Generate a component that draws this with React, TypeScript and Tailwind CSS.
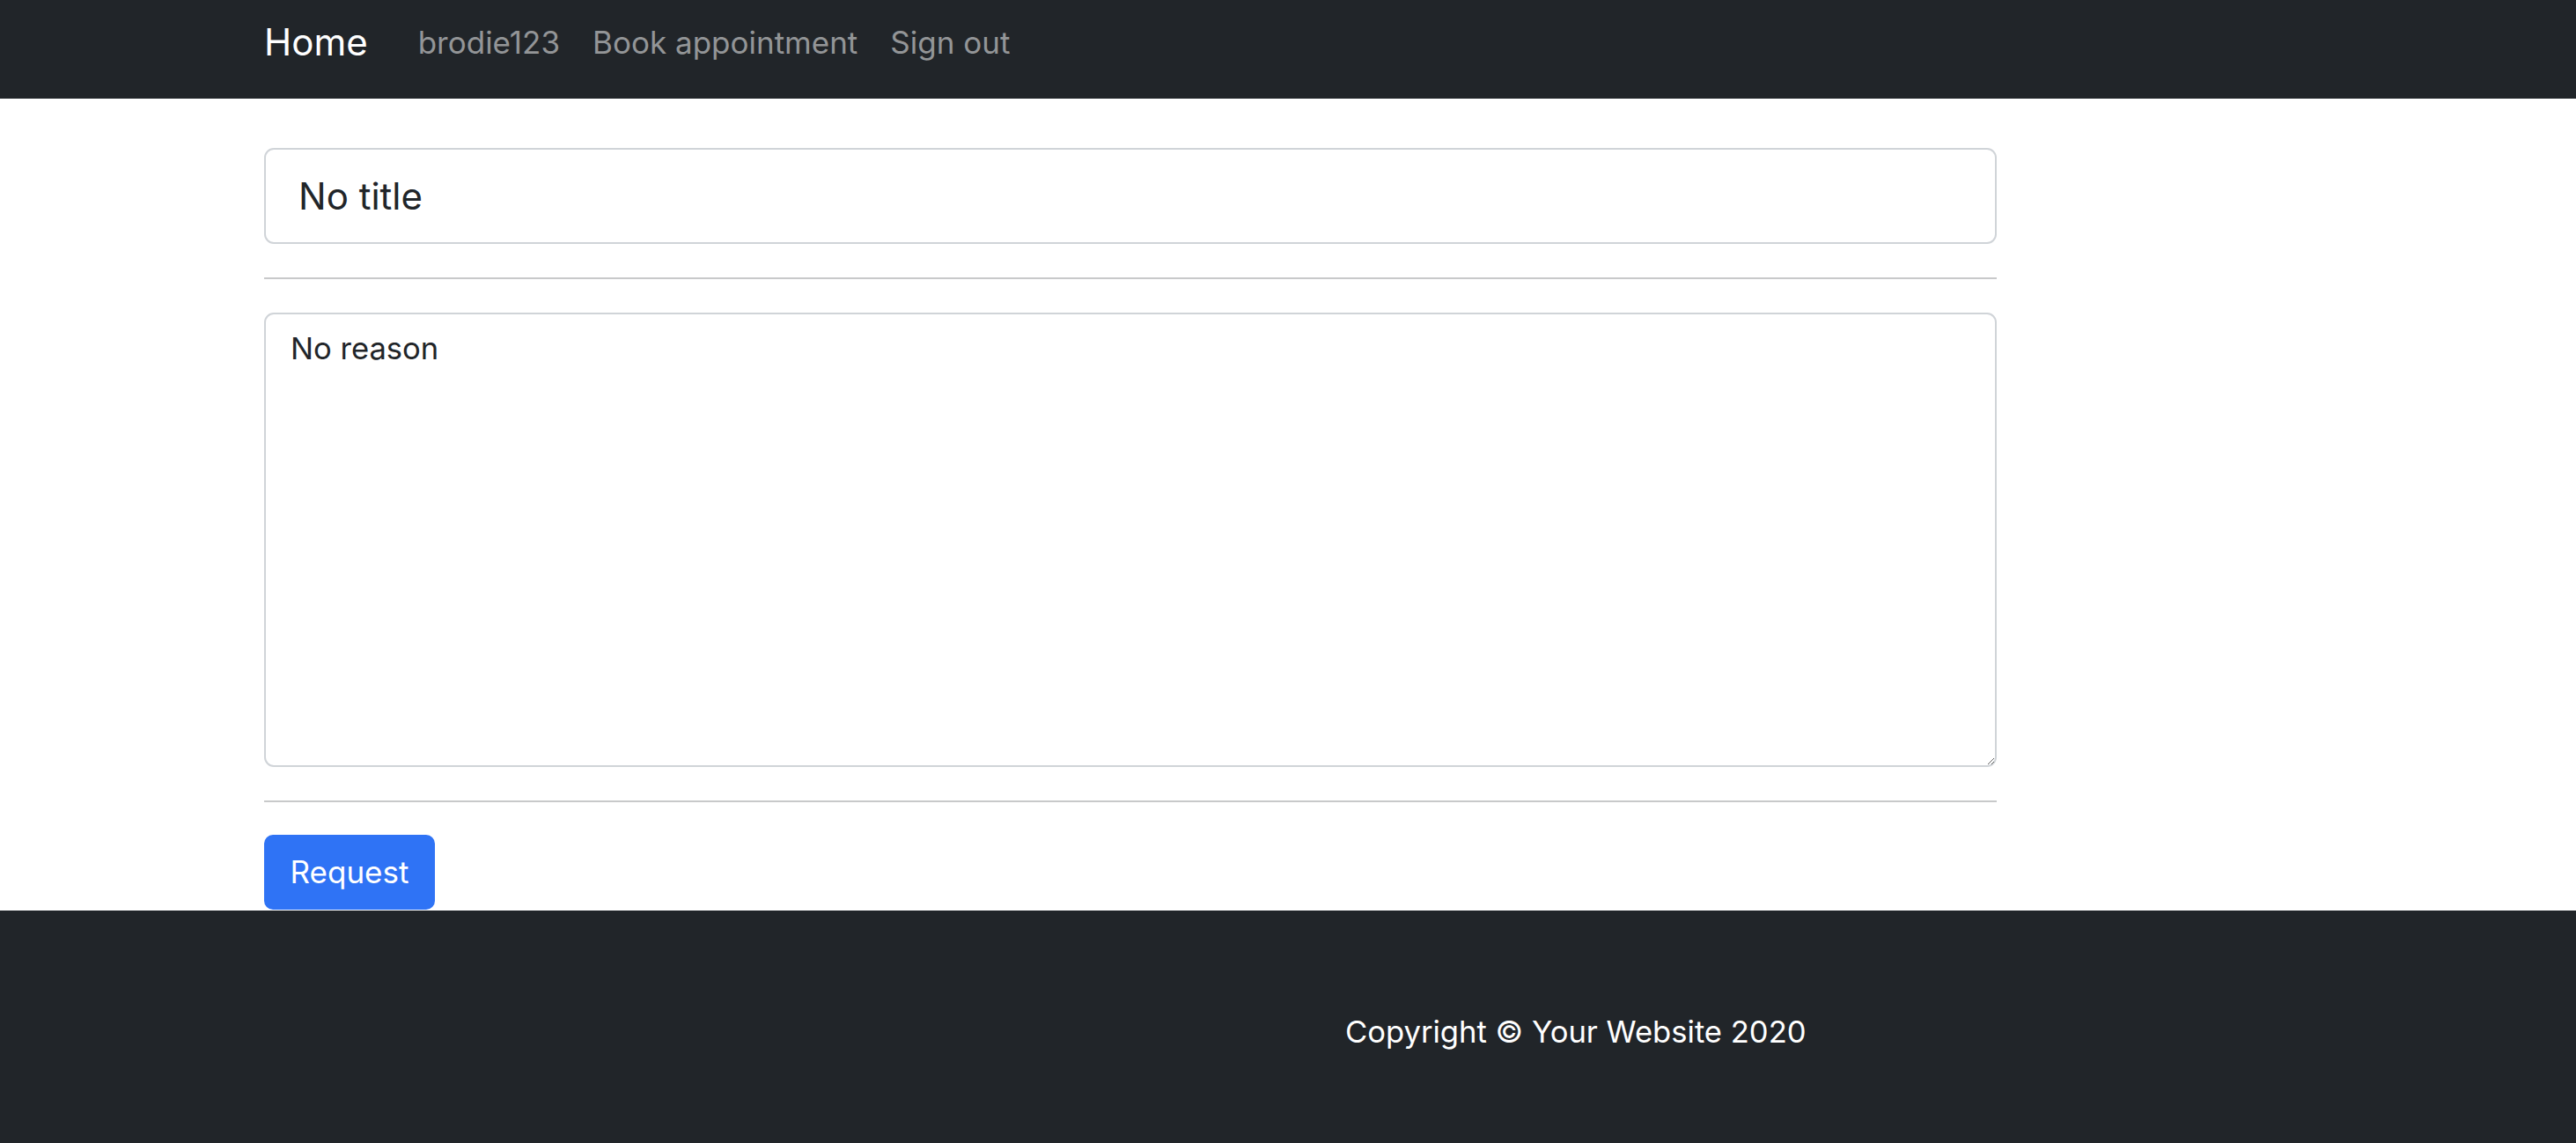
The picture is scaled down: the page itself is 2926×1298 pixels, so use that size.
export default function App() {
  return (
    <div className="min-h-screen bg-white font-['Inter','Liberation_Sans',sans-serif] text-[#212529]">
      {/* Navbar */}
      <nav className="flex h-[112px] items-center bg-[#212529] pb-[16px] pl-[300px]">
        <a href="#" className="text-[42px] leading-none text-white">
          Home
        </a>
        <ul className="ml-[57px] flex items-center gap-[37px] text-[35px] leading-none text-[#939597]">
          <li><a href="#">brodie123</a></li>
          <li><a href="#">Book appointment</a></li>
          <li><a href="#">Sign out</a></li>
        </ul>
      </nav>

      {/* Form */}
      <main className="ml-[300px] w-[1968px] pt-[56px]">
        <input
          type="text"
          readOnly
          value="No title"
          className="block h-[109px] w-full rounded-[11px] border-2 border-[#d0d4d8] bg-white px-[37px] text-[42px] text-[#212529] outline-none"
        />
        <hr className="my-[38px] h-0 border-t-2 border-[#c8c9ca]" />
        <textarea
          readOnly
          defaultValue="No reason"
          className="block h-[516px] w-full rounded-[11px] border-2 border-[#d0d4d8] bg-white px-[28px] py-[13px] text-[34.6px] leading-[1.5] text-[#212529] outline-none"
        />
        <hr className="mb-[37px] mt-[38px] h-0 border-t-2 border-[#c8c9ca]" />
        <button className="flex h-[85px] w-[194px] items-center justify-center rounded-[10px] bg-[#2f73f5] text-[35px] text-white">
          Request
        </button>
      </main>

      {/* Footer */}
      <footer className="mt-px h-[264px] bg-[#212529] pl-[1528px] pt-[120px]">
        <p className="text-[34.6px] leading-none text-white">Copyright © Your Website 2020</p>
      </footer>
    </div>
  );
}
